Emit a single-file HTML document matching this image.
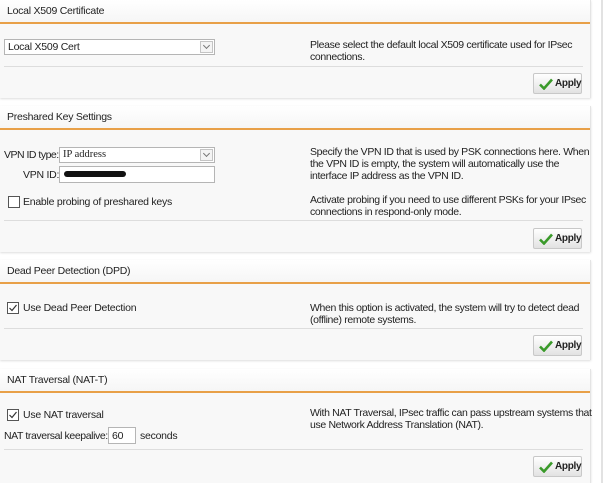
<!DOCTYPE html>
<html><head><style>
body{margin:0;width:604px;height:483px;background:#fff;font-family:"Liberation Sans",sans-serif;font-size:10.5px;letter-spacing:-0.25px;color:#222;position:relative;overflow:hidden}
.p{position:absolute;left:0;width:590px;background:#f8f8f8;border-right:1px solid #e4e4e4;box-shadow:0 1px 2px #ddd}
.h{position:absolute;left:0;top:0;width:590px;height:22px;background:linear-gradient(#fff,#f6f6f6);border-bottom:2px solid #e8a048}
.h span{position:absolute;left:7px;top:5px;white-space:nowrap}
.a{position:absolute;white-space:nowrap}
.sep{position:absolute;left:4px;width:579px;height:1px;background:#ddd}
.btn{position:absolute;left:533px;width:49px;height:21px;border:1px solid #c8c8c8;border-radius:2px;background:linear-gradient(#fff,#e2e2e2);box-sizing:border-box;font-weight:bold;font-size:10px;letter-spacing:-0.3px}
.btn span{position:absolute;left:21px;top:4px}
.btn svg{position:absolute;left:5px;top:4px}
.sel{position:absolute;background:#fff;border:1px solid #b5b5b5;box-sizing:border-box;height:16px;padding:1px 3px;white-space:nowrap}
.sel i{position:absolute;right:1px;top:1px;width:13px;height:12px;border:1px solid #c4c4c4;box-sizing:border-box;background:#f4f4f4}
.sel i:after{content:"";position:absolute;left:3px;top:1px;width:4px;height:4px;border-right:1px solid #777;border-bottom:1px solid #777;transform:rotate(45deg)}
.cb{position:absolute;width:10px;height:10px;border:1px solid #555;background:#fff}
.txt{position:absolute;left:310px;line-height:12px;white-space:nowrap;letter-spacing:-0.35px}
.vl{position:absolute;left:601px;top:0;width:2px;height:483px;background:#e2e2e2}
</style></head><body>
<div class="vl"></div>
<svg width="0" height="0" style="position:absolute"><defs><symbol id="ck" viewBox="0 0 14 12"><path d="M1 6.5 L5 10.5 L13 1.5" fill="none" stroke="#3a9a2a" stroke-width="2.6"/></symbol></defs></svg>

<div class="p" style="top:0;height:98px">
<div class="h"><span>Local X509 Certificate</span></div>
<div class="sel" style="left:4px;top:39px;width:211px">Local X509 Cert<i></i></div>
<div class="txt" style="top:39px">Please select the default local X509 certificate used for IPsec<br>connections.</div>
<div class="sep" style="top:66px"></div>
<div class="btn" style="top:73px"><svg width="14" height="12"><use href="#ck"/></svg><span>Apply</span></div>
</div>

<div class="p" style="top:106px;height:146px">
<div class="h"><span>Preshared Key Settings</span></div>
<div class="a" style="left:4px;top:43px;letter-spacing:-0.5px">VPN ID type:</div>
<div class="sel" style="left:59px;top:41px;width:156px;font-family:'Liberation Serif',serif;letter-spacing:0">IP address<i></i></div>
<div class="a" style="left:23px;top:63px">VPN ID:</div>
<div class="sel" style="left:59px;top:60px;width:156px;height:17px"><div style="position:absolute;left:4px;top:4px;width:62px;height:6px;background:#111;border-radius:4px"></div></div>
<div class="cb" style="left:8px;top:90px"></div>
<div class="a" style="left:23px;top:90px">Enable probing of preshared keys</div>
<div class="txt" style="top:40px">Specify the VPN ID that is used by PSK connections here. When<br>the VPN ID is empty, the system will automatically use the<br>interface IP address as the VPN ID.<br><br>Activate probing if you need to use different PSKs for your IPsec<br>connections in respond-only mode.</div>
<div class="sep" style="top:114px"></div>
<div class="btn" style="top:122px"><svg width="14" height="12"><use href="#ck"/></svg><span>Apply</span></div>
</div>

<div class="p" style="top:260px;height:100px">
<div class="h"><span>Dead Peer Detection (DPD)</span></div>
<div class="cb" style="left:7px;top:42px"><svg width="10" height="10" style="position:absolute;left:0;top:0"><path d="M1.5 5 L4 7.5 L8.5 2" fill="none" stroke="#333" stroke-width="1.2"/></svg></div>
<div class="a" style="left:23px;top:42px">Use Dead Peer Detection</div>
<div class="txt" style="top:42px">When this option is activated, the system will try to detect dead<br>(offline) remote systems.</div>
<div class="sep" style="top:68px"></div>
<div class="btn" style="top:75px"><svg width="14" height="12"><use href="#ck"/></svg><span>Apply</span></div>
</div>

<div class="p" style="top:369px;height:114px">
<div class="h"><span>NAT Traversal (NAT-T)</span></div>
<div class="cb" style="left:7px;top:40px"><svg width="10" height="10" style="position:absolute;left:0;top:0"><path d="M1.5 5 L4 7.5 L8.5 2" fill="none" stroke="#333" stroke-width="1.2"/></svg></div>
<div class="a" style="left:23px;top:40px">Use NAT traversal</div>
<div class="a" style="left:4px;top:61px;letter-spacing:-0.4px">NAT traversal keepalive:</div>
<div class="sel" style="left:108px;top:58px;width:28px;height:17px;padding-top:2px">60</div>
<div class="a" style="left:140px;top:61px">seconds</div>
<div class="txt" style="top:38px">With NAT Traversal, IPsec traffic can pass upstream systems that<br>use Network Address Translation (NAT).</div>
<div class="sep" style="top:80px"></div>
<div class="btn" style="top:87px"><svg width="14" height="12"><use href="#ck"/></svg><span>Apply</span></div>
</div>
</body></html>
